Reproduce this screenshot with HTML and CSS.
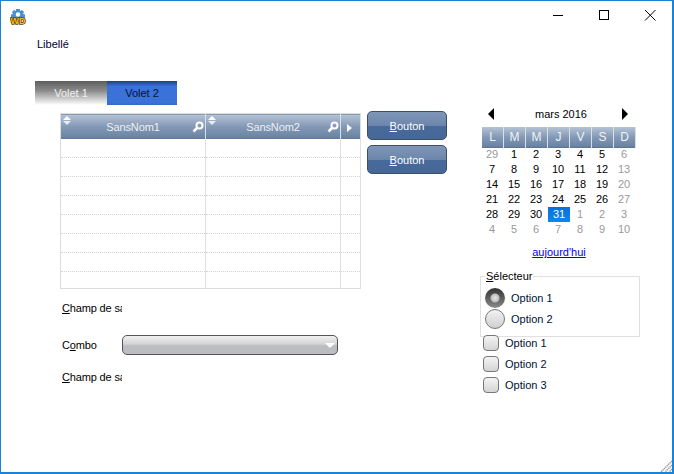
FILE: index.html
```html
<!DOCTYPE html>
<html lang="fr">
<head>
    <meta charset="UTF-8">
    <title>Fenêtre</title>
    <link rel="stylesheet" href="styles.css">
</head>
<body>
<div class="window">
    <div class="titlebar">
        <svg class="app-icon" width="16" height="16" viewBox="0 0 16 16">
            <path d="M6 0h4v2l2-1 2 2-1 2 2 .5v4H1V5.500L3 5 2 3l2-2 2 1z" fill="#4a8fd0"/>
            <circle cx="8" cy="5.500" r="2.200" fill="#fff"/>
            <text x="8" y="14.500" class="app-icon-text" text-anchor="middle">WD</text>
        </svg>
        <div class="controls">
            <svg class="ctl" width="46" height="29" viewBox="0 0 46 29"><path d="M18 14.500h10" stroke="#000"/></svg>
            <svg class="ctl" width="46" height="29" viewBox="0 0 46 29"><rect x="18.500" y="9.500" width="9" height="9" fill="none" stroke="#000"/></svg>
            <svg class="ctl" width="46" height="29" viewBox="0 0 46 29"><path d="M18 9l10.500 10.500M28.500 9L18 19.500" stroke="#000" fill="none"/></svg>
        </div>
    </div>

    <div class="content">
        <div class="left">
            <div class="libelle">Libellé</div>
            <div class="tabs">
                <div class="tab tab-off">Volet 1</div>
                <div class="tab tab-on">Volet 2</div>
            </div>
            <div class="panel">
                <div class="table-row">
                    <table class="grid">
                        <thead>
                            <tr>
                                <th class="col1"><span class="sort"></span>SansNom1<svg class="loupe" width="12" height="12" viewBox="0 0 12 12"><circle cx="7.500" cy="4.500" r="3" fill="none" stroke="#fff" stroke-width="2"/><path d="M5 7L1.500 10.500" stroke="#fff" stroke-width="2.500"/></svg></th>
                                <th class="col2"><span class="sort"></span>SansNom2<svg class="loupe" width="12" height="12" viewBox="0 0 12 12"><circle cx="7.500" cy="4.500" r="3" fill="none" stroke="#fff" stroke-width="2"/><path d="M5 7L1.500 10.500" stroke="#fff" stroke-width="2.500"/></svg></th>
                                <th class="col3"><span class="next"></span></th>
                            </tr>
                        </thead>
                        <tbody>
                            <tr><td></td><td></td><td></td></tr>
                            <tr><td></td><td></td><td></td></tr>
                            <tr><td></td><td></td><td></td></tr>
                            <tr><td></td><td></td><td></td></tr>
                            <tr><td></td><td></td><td></td></tr>
                            <tr><td></td><td></td><td></td></tr>
                            <tr><td></td><td></td><td></td></tr>
                            <tr class="last"><td></td><td></td><td></td></tr>
                        </tbody>
                    </table>
                    <div class="buttons">
                        <button class="btn"><u>B</u>outon</button>
                        <button class="btn"><u>B</u>outon</button>
                    </div>
                </div>
                <div class="field first"><span class="field-label"><u>C</u>hamp de saisie</span></div>
                <div class="field combo-field">
                    <span class="field-label">C<u>o</u>mbo</span>
                    <div class="combo"><span class="combo-arrow"></span></div>
                </div>
                <div class="field"><span class="field-label"><u>C</u>hamp de saisie</span></div>
            </div>
        </div>

        <div class="right">
            <div class="calendar">
                <div class="cal-nav">
                    <span class="arrow-left"></span>
                    <span class="cal-title">mars 2016</span>
                    <span class="arrow-right"></span>
                </div>
                <div class="cal-head">
                    <span>L</span><span>M</span><span>M</span><span>J</span><span>V</span><span>S</span><span>D</span>
                </div>
                <div class="cal-days">
                    <span class="dim">29</span><span>1</span><span>2</span><span>3</span><span>4</span><span>5</span><span class="dim">6</span>
                    <span>7</span><span>8</span><span>9</span><span>10</span><span>11</span><span>12</span><span class="dim">13</span>
                    <span>14</span><span>15</span><span>16</span><span>17</span><span>18</span><span>19</span><span class="dim">20</span>
                    <span>21</span><span>22</span><span>23</span><span>24</span><span>25</span><span>26</span><span class="dim">27</span>
                    <span>28</span><span>29</span><span>30</span><span class="today">31</span><span class="dim">1</span><span class="dim">2</span><span class="dim">3</span>
                    <span class="dim">4</span><span class="dim">5</span><span class="dim">6</span><span class="dim">7</span><span class="dim">8</span><span class="dim">9</span><span class="dim">10</span>
                </div>
                <a class="cal-today" href="#">aujourd'hui</a>
            </div>

            <fieldset class="selector">
                <legend><u>S</u>électeur</legend>
                <div class="radio-row"><span class="radio checked"></span>Option 1</div>
                <div class="radio-row"><span class="radio"></span>Option 2</div>
            </fieldset>

            <div class="checks">
                <div class="check-row"><span class="check"></span>Option 1</div>
                <div class="check-row"><span class="check"></span>Option 2</div>
                <div class="check-row"><span class="check"></span>Option 3</div>
            </div>
        </div>
    </div>

    <svg class="grip" width="12" height="12" viewBox="0 0 12 12">
        <path d="M12 1L1 12M12 5L5 12M12 9L9 12" stroke="#999" stroke-width="1.500" stroke-dasharray="1.400 .6"/>
    </svg>
</div>
</body>
</html>
```

FILE: styles.css
```css
html, body {
    margin: 0;
    padding: 0;
}
body {
    font-family: "Liberation Sans", Arial, sans-serif;
    font-size: 11px;
    color: #000;
    background-color: #fff;
}
.window {
    position: relative;
    width: 674px;
    height: 474px;
    box-sizing: border-box;
    border: 1px solid #1883d7;
    border-width: 1px 2px 2px 1px;
    background-color: #fff;
    overflow: hidden;
}

/* title bar */
.titlebar {
    display: flex;
    justify-content: space-between;
    height: 29px;
}
.app-icon {
    margin: 8px 0 0 9px;
}
.app-icon-text {
    font-family: "Liberation Sans", sans-serif;
    font-size: 9px;
    font-weight: bold;
    fill: #f5bd1c;
    stroke: #5c4300;
    stroke-width: 1.500px;
    paint-order: stroke;
}
.controls {
    display: flex;
    margin-right: -1px;
}

/* main layout */
.content {
    display: flex;
}
.left {
    width: 445px;
    padding-left: 34px;
    flex: none;
}
.libelle {
    margin: 8px 0 0 2px;
    height: 13px;
    line-height: 13px;
    color: #000033;
}
.tabs {
    display: flex;
    margin-top: 30px;
    height: 24px;
}
.tab {
    font-size: 11px;
    line-height: 24px;
    text-align: center;
}
.tab-off {
    width: 72px;
    color: #f0f0f0;
    background: linear-gradient(#5e5e5e, #8a8a8a 40%, #fff);
}
.tab-on {
    width: 70px;
    color: #06122e;
    background: linear-gradient(#1f3f80, #3a72d8 22%, #3a72d8 90%, #3268c4);
}
.panel {
    padding-left: 25px;
}

/* table */
.table-row {
    display: flex;
    gap: 6px;
    align-items: flex-start;
    margin-top: 6px;
}
.grid {
    width: 301px;
    margin-top: 2px;
    border-collapse: collapse;
    table-layout: fixed;
    border: 2px solid #dcdcdc;
    border-width: 1px 1px 1px 1px;
}
.grid th {
    position: relative;
    height: 25px;
    padding: 0;
    font-weight: normal;
    font-size: 11px;
    letter-spacing: -0.100px;
    color: #eef1f5;
    text-align: center;
    background: linear-gradient(#b5c3d5, #8298b5 50%, #6b83a4 92%, #56708f);
    border-right: 1px solid #d8e0e8;
}
.col1 { width: 144px; }
.col2 { width: 134px; }
.grid td {
    height: 18px;
    padding: 0;
    border-right: 1px solid #e0e0e0;
    border-bottom: 1px dotted #d4d4d4;
}
.grid .last td {
    height: 16px;
    border-bottom: none;
}
.sort {
    position: absolute;
    left: 2px;
    top: 2px;
    width: 8px;
    height: 9px;
}
.sort::before, .sort::after {
    content: "";
    position: absolute;
    left: 0;
    border-left: 4px solid transparent;
    border-right: 4px solid transparent;
}
.sort::before {
    top: 0;
    border-bottom: 4px solid #fff;
}
.sort::after {
    bottom: 0;
    border-top: 4px solid #e8edf3;
}
.loupe {
    position: absolute;
    right: 1px;
    top: 7px;
}
.next {
    display: inline-block;
    vertical-align: middle;
    margin-right: 2px;
    border-left: 5px solid #fff;
    border-top: 4px solid transparent;
    border-bottom: 4px solid transparent;
}

/* buttons */
.buttons {
    display: flex;
    flex-direction: column;
    gap: 5px;
}
.btn {
    width: 80px;
    height: 29px;
    padding: 0;
    font-family: inherit;
    font-size: 11px;
    color: #fff;
    border: 1px solid #3b4f68;
    border-radius: 5px;
    background: linear-gradient(#7f96b8, #6c86ab 50%, #476a9a 52%, #456899);
}

/* fields */
.field {
    height: 13px;
    line-height: 13px;
    width: 300px;
    margin-left: 2px;
}
.first {
    margin-top: 13px;
}
.field-label {
    display: inline-block;
    width: 60px;
    white-space: nowrap;
    overflow: hidden;
    vertical-align: top;
    letter-spacing: -0.150px;
}
.combo-field {
    display: flex;
    align-items: center;
    height: 20px;
    margin: 20px 0 16px 2px;
}
.combo {
    position: relative;
    flex: none;
    width: 216px;
    height: 20px;
    box-sizing: border-box;
    border: 1px solid #555;
    border-radius: 5px;
    background: linear-gradient(#f0f0f0, #d4d4d6 45%, #bcbdc1 55%);
}
.combo-arrow {
    position: absolute;
    right: 2px;
    top: 7px;
    border-top: 5px solid #fff;
    border-left: 5px solid transparent;
    border-right: 5px solid transparent;
}

/* calendar */
.right {
    width: 160px;
    flex: none;
}
.calendar {
    width: 154px;
    margin: 78px 0 0 2px;
}
.cal-nav {
    display: flex;
    justify-content: space-between;
    align-items: center;
    height: 11px;
    padding: 0 8px 0 6px;
    margin-bottom: 8px;
}
.cal-title {
    margin-left: 6px;
}
.arrow-left, .arrow-right {
    border-top: 6px solid transparent;
    border-bottom: 6px solid transparent;
}
.arrow-left {
    border-right: 6px solid #000;
}
.arrow-right {
    border-left: 6px solid #000;
}
.cal-head {
    display: grid;
    grid-template-columns: repeat(7, 22px);
    height: 21px;
}
.cal-head span {
    line-height: 21px;
    text-align: center;
    color: #f0f3f7;
    font-size: 12px;
    background: linear-gradient(#b5c3d5, #8298b5 50%, #6b83a4 92%, #56708f);
    border-right: 1px solid #d8e0e8;
}
.cal-days {
    display: grid;
    grid-template-columns: repeat(7, 22px);
    grid-auto-rows: 15px;
    margin-top: -1px;
}
.cal-days span {
    padding-right: 2px;
    line-height: 15px;
    text-align: center;
}
.cal-days .dim {
    color: #999;
}
.cal-days .today {
    padding-right: 0;
    color: #fff;
    background: linear-gradient(#0a6fd8, #0e86ee);
}
.cal-today {
    display: block;
    margin-top: 9px;
    text-align: center;
    line-height: 13px;
    color: #0000ee;
}

/* selector */
.selector {
    width: 160px;
    height: 67px;
    box-sizing: border-box;
    margin: 11px 0 0;
    padding: 4px 0 0 4px;
    border: 1px solid #e0e0e0;
}
.selector legend {
    padding: 0 1px;
    margin-left: 0;
    line-height: 13px;
}
.radio-row {
    display: flex;
    align-items: center;
    gap: 6px;
    height: 21px;
    color: #001133;
}
.radio {
    width: 20px;
    height: 20px;
    box-sizing: border-box;
    border: 1px solid #777;
    border-radius: 50%;
    background: linear-gradient(#f2f2f2, #d0d0d0);
}
.radio.checked {
    border: none;
    background: radial-gradient(circle, #e8e8e8 0, #bbb 4px, transparent 5px), linear-gradient(#333, #8a8a8a);
}
.checks {
    margin-top: -5px;
}
.check-row {
    display: flex;
    align-items: center;
    gap: 6px;
    height: 21px;
    margin-left: 3px;
    color: #001133;
}
.check {
    width: 16px;
    height: 16px;
    box-sizing: border-box;
    border: 1px solid #777;
    border-radius: 4px;
    background: linear-gradient(#f4f4f4, #d4d4d4);
}

/* resize grip */
.grip {
    position: absolute;
    right: 0;
    bottom: 0;
}
```
